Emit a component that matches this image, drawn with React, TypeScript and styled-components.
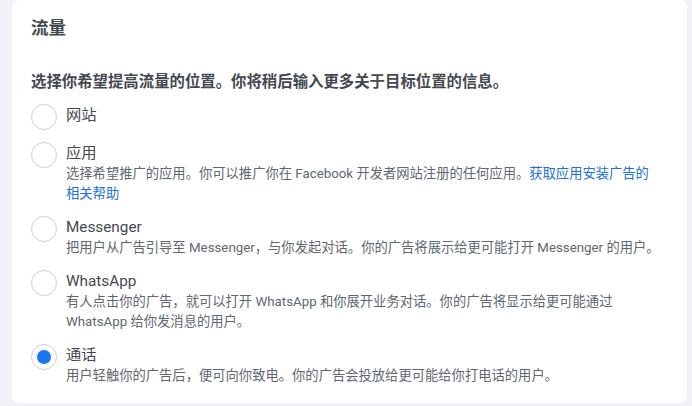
import React, { useState } from 'react';
import styled, { createGlobalStyle } from 'styled-components';

const GlobalStyle = createGlobalStyle`
  html, body {
    margin: 0;
    padding: 0;
    background: #f0f2f5;
  }
  body {
    font-family: Roboto, "Liberation Sans", Arial, "Noto Sans CJK SC", sans-serif;
    -webkit-font-smoothing: antialiased;
  }
`;

interface Option {
  id: string;
  label: string;
  description?: string;
  linkText?: string;
}

const options: Option[] = [
  { id: 'website', label: '网站' },
  {
    id: 'app',
    label: '应用',
    description: '选择希望推广的应用。你可以推广你在 Facebook 开发者网站注册的任何应用。',
    linkText: '获取应用安装广告的相关帮助',
  },
  {
    id: 'messenger',
    label: 'Messenger',
    description: '把用户从广告引导至 Messenger，与你发起对话。你的广告将展示给更可能打开 Messenger 的用户。',
  },
  {
    id: 'whatsapp',
    label: 'WhatsApp',
    description: '有人点击你的广告，就可以打开 WhatsApp 和你展开业务对话。你的广告将显示给更可能通过 WhatsApp 给你发消息的用户。',
  },
  {
    id: 'calls',
    label: '通话',
    description: '用户轻触你的广告后，便可向你致电。你的广告会投放给更可能给你打电话的用户。',
  },
];

const App = () => {
  const [selected, setSelected] = useState('calls');

  return (
    <>
      <GlobalStyle />
      <Page>
        <Card>
          <Title>流量</Title>
          <Heading>选择你希望提高流量的位置。你将稍后输入更多关于目标位置的信息。</Heading>
          <OptionList>
            {options.map((option) => (
              <Row key={option.id} onClick={() => setSelected(option.id)}>
                <Radio checked={selected === option.id} />
                <TextColumn>
                  <Label>{option.label}</Label>
                  {option.description && (
                    <Description>
                      {option.description}
                      {option.linkText && <Link href="#">{option.linkText}</Link>}
                    </Description>
                  )}
                </TextColumn>
              </Row>
            ))}
          </OptionList>
        </Card>
      </Page>
    </>
  );
};

export default App;

const Page = styled.div`
  width: 692px;
  height: 406px;
  padding: 0 5px 0 12px;
  box-sizing: border-box;
`;

const Card = styled.section`
  background: #fff;
  border-radius: 8px;
  height: 403px;
  box-sizing: border-box;
  padding: 16px 25px 20px 19px;
  display: flex;
  flex-direction: column;
`;

const Title = styled.h2`
  margin: 0;
  font-size: 17.5px;
  line-height: 24px;
  font-weight: 700;
  color: #444950;
`;

const Heading = styled.div`
  margin-top: 32px;
  font-size: 15.4px;
  line-height: 20px;
  font-weight: 700;
  color: #444950;
`;

const OptionList = styled.div`
  margin-top: 12px;
  display: flex;
  flex-direction: column;
  gap: 12px;
`;

const Row = styled.div`
  display: flex;
  align-items: flex-start;
  gap: 9px;
  cursor: pointer;
`;

const Radio = styled.span<{ checked?: boolean }>`
  flex: none;
  width: 24px;
  height: 24px;
  border-radius: 50%;
  border: 1px solid #ccd0d5;
  background: #fff;
  display: flex;
  align-items: center;
  justify-content: center;

  &::after {
    content: '';
    width: 14px;
    height: 14px;
    border-radius: 50%;
    background: #1877f2;
    display: ${(props) => (props.checked ? 'block' : 'none')};
  }
`;

const TextColumn = styled.div`
  display: flex;
  flex-direction: column;
  flex: 1;
  min-width: 0;
`;

const Label = styled.div`
  margin-top: 1px;
  font-size: 15.3px;
  line-height: 21px;
  color: #444950;
`;

const Description = styled.div`
  font-size: 13.3px;
  line-height: 20px;
  color: #606770;
`;

const Link = styled.a`
  color: #216fdb;
  text-decoration: none;
`;
